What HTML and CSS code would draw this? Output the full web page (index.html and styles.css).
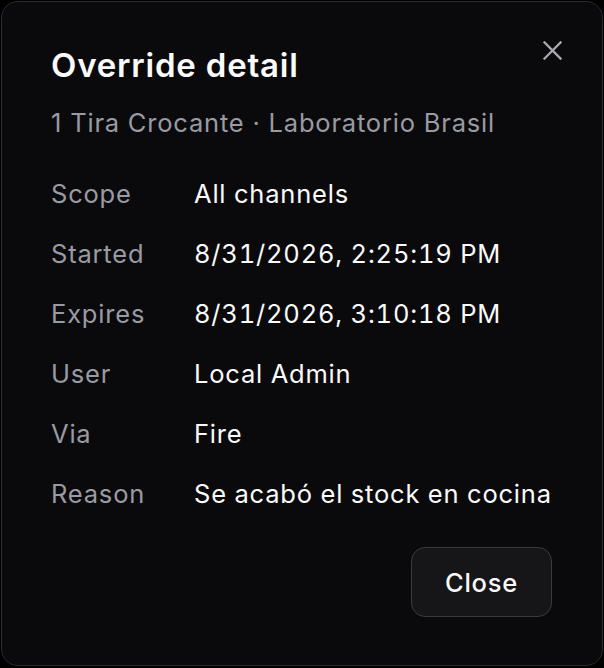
FILE: index.html
```html
<!DOCTYPE html>
<html lang="en">
<head>
<meta charset="utf-8">
<title>Override detail</title>
<link rel="stylesheet" href="styles.css">
</head>
<body>
<div class="modal" role="dialog" aria-labelledby="t">
  <button class="x" aria-label="Close">
    <svg viewBox="0 0 20 20" width="20" height="20"><path d="M1.5 1.5 L18.5 18.5 M18.5 1.5 L1.5 18.5" stroke="currentColor" stroke-width="2.4" stroke-linecap="square" fill="none"/></svg>
  </button>
  <h2 class="title" id="t">Override detail</h2>
  <p class="sub">1 Tira Crocante · Laboratorio Brasil</p>
  <dl class="rows">
    <dt>Scope</dt><dd>All channels</dd>
    <dt>Started</dt><dd>8/31/2026, 2:25:19 PM</dd>
    <dt>Expires</dt><dd>8/31/2026, 3:10:18 PM</dd>
    <dt>User</dt><dd>Local Admin</dd>
    <dt>Via</dt><dd>Fire</dd>
    <dt>Reason</dt><dd>Se acabó el stock en cocina</dd>
  </dl>
  <div class="actions">
    <button class="btn">Close</button>
  </div>
</div>
</body>
</html>
```

FILE: styles.css
```css
html, body {
  margin: 0;
  padding: 0;
  background: #000;
  height: 100%;
}
body {
  font-family: Inter, "Noto Sans", "Liberation Sans", sans-serif;
  color: #fafafa;
  padding: 1px;
  box-sizing: border-box;
}
.modal {
  position: relative;
  box-sizing: border-box;
  width: 602px;
  height: 665px;
  background: #0a0a0c;
  border: 1px solid #2a2a2e;
  border-radius: 17px;
  padding: 44px 50px 0 49px;
}
.x {
  position: absolute;
  top: 37px;
  right: 39px;
  width: 22px;
  height: 22px;
  padding: 1px;
  border: 0;
  background: transparent;
  color: #a8a8ae;
  display: flex;
  align-items: center;
  justify-content: center;
}
.x svg { width: 19px; height: 19px; display: block; }
.title {
  margin: 0;
  font-size: 33px;
  line-height: 38px;
  font-weight: 600;
  letter-spacing: 0.8px;
  color: #fafafa;
}
.sub {
  margin: 21px 0 0 0;
  font-size: 25.5px;
  line-height: 35px;
  letter-spacing: 0.8px;
  color: #9a9aa3;
  white-space: nowrap;
}
.rows {
  margin: 36px 0 0 0;
  display: grid;
  grid-template-columns: 143px 1fr;
  row-gap: 25px;
  font-size: 25.5px;
  line-height: 35px;
  letter-spacing: 0.8px;
}
.rows dt {
  color: #9a9aa3;
}
.rows dd {
  margin: 0;
  color: #fafafa;
  white-space: nowrap;
  font-variant-numeric: tabular-nums;
}
.actions {
  display: flex;
  justify-content: flex-end;
  margin-top: 36px;
}
.btn {
  box-sizing: border-box;
  height: 70px;
  width: 141px;
  background: #161618;
  border: 1.5px solid #3a3a40;
  border-radius: 14px;
  color: #fafafa;
  font-family: inherit;
  font-size: 25.5px;
  font-weight: 500;
  line-height: 35px;
  letter-spacing: 0.8px;
}
```
